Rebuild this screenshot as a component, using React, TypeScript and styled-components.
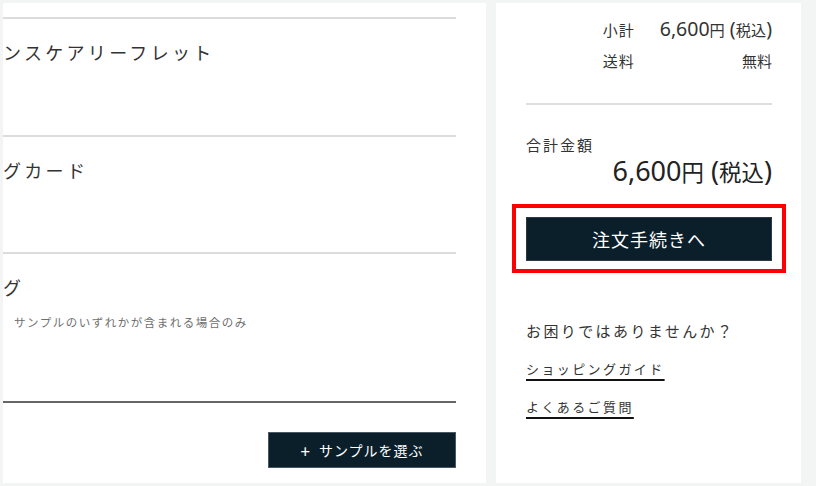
import React from "react";
import styled, { createGlobalStyle } from "styled-components";

const Global = createGlobalStyle`
  html, body { margin: 0; padding: 0; background: #f3f4f4; }
  body { font-family: "Noto Sans CJK JP", "Noto Sans", sans-serif; color: #333; }
  * { box-sizing: border-box; }
`;

const Page = styled.div`
  display: flex;
  gap: 10px;
  height: 486px;
  padding: 3px 15px 3px 3px;
`;

const LeftPanel = styled.div`
  width: 483px;
  background: #fff;
  padding: 14px 30px 0 0;
  display: flex;
  flex-direction: column;
  overflow: hidden;
`;

const Section = styled.div<{ $h: number; $last?: boolean }>`
  border-top: 2px solid #dcdcdc;
  height: ${(p) => p.$h}px;
  padding-top: 20px;
  ${(p) => (p.$last ? "border-bottom: 2px solid #666;" : "")}
`;

const Title = styled.div`
  font-size: 18px;
  line-height: 26px;
  letter-spacing: 3.3px;
  white-space: nowrap;
  color: #333;
`;

const Note = styled.div`
  margin-top: 13px;
  padding-left: 11px;
  font-size: 11.5px;
  line-height: 18px;
  letter-spacing: 1.5px;
  color: #6f6f6f;
  white-space: nowrap;
`;

const SampleButton = styled.button`
  align-self: flex-end;
  margin-top: 29px;
  width: 188px;
  height: 36px;
  background: #0b1f2b;
  border: 1px solid #4a5862;
  color: #fff;
  font-family: inherit;
  font-size: 14px;
  letter-spacing: 1px;
  display: flex;
  align-items: center;
  justify-content: center;
  gap: 8px;
  cursor: pointer;
`;

const Plus = styled.span`
  font-size: 17px;
  line-height: 1;
`;

const RightPanel = styled.div`
  width: 305px;
  background: #fff;
  padding: 12px 29px 0 30px;
  display: flex;
  flex-direction: column;
`;

const Summary = styled.div`
  display: grid;
  grid-template-columns: auto auto;
  grid-auto-rows: 30px;
  justify-content: end;
  column-gap: 25px;
  row-gap: 1px;
  font-size: 15px;
  line-height: 30px;
`;

const Label = styled.div`
  letter-spacing: 1px;
`;

const Value = styled.div`
  text-align: right;
`;

const PriceText = styled.span<{ $size: number }>`
  font-family: "Noto Sans", sans-serif;
  font-size: ${(p) => p.$size}px;
  line-height: 1;
  white-space: nowrap;
`;

const Kanji = styled.span<{ $ratio: number }>`
  font-family: "Noto Sans CJK JP", sans-serif;
  font-size: ${(p) => p.$ratio}em;
`;

function Price({ size, ratio }: { size: number; ratio: number }) {
  return (
    <PriceText $size={size}>
      6,600<Kanji $ratio={ratio}>円</Kanji> (<Kanji $ratio={ratio}>税込</Kanji>)
    </PriceText>
  );
}

const Divider = styled.div`
  margin-top: 27px;
  border-top: 2px solid #dedede;
`;

const TotalLabel = styled.div`
  margin-top: 29px;
  font-size: 15px;
  line-height: 22px;
  letter-spacing: 2px;
`;

const TotalValue = styled.div`
  margin-top: 1px;
  height: 30px;
  text-align: right;
  line-height: 30px;
  color: #222;
`;

const Highlight = styled.div`
  margin: 17px -14px 0;
  border: 4px solid #ff0000;
  padding: 9px 10px 8px;
`;

const CheckoutButton = styled.button`
  width: 100%;
  height: 44px;
  background: #0b1f2b;
  border: 1px solid #2c3a44;
  color: #fff;
  font-family: inherit;
  font-size: 18px;
  letter-spacing: 1px;
  cursor: pointer;
`;

const HelpTitle = styled.div`
  margin-top: 46px;
  font-size: 15px;
  line-height: 24px;
  letter-spacing: 2.4px;
`;

const HelpLinks = styled.div`
  display: flex;
  flex-direction: column;
  align-items: flex-start;
  gap: 18px;
  margin-top: 16px;
`;

const HelpLink = styled.a`
  font-size: 13px;
  line-height: 20px;
  letter-spacing: 2.4px;
  color: #333;
  text-decoration: underline;
  text-decoration-color: #111;
  text-decoration-thickness: 1.5px;
  text-underline-offset: 5px;
  cursor: pointer;
`;

export default function App() {
  return (
    <>
      <Global />
      <Page>
        <LeftPanel>
          <Section $h={118}>
            <Title>ンスケアリーフレット</Title>
          </Section>
          <Section $h={117}>
            <Title>グカード</Title>
          </Section>
          <Section $h={151} $last>
            <Title>グ</Title>
            <Note>サンプルのいずれかが含まれる場合のみ</Note>
          </Section>
          <SampleButton>
            <Plus>+</Plus>
            <span>サンプルを選ぶ</span>
          </SampleButton>
        </LeftPanel>
        <RightPanel>
          <Summary>
            <Label>小計</Label>
            <Value>
              <Price size={19.5} ratio={0.78} />
            </Value>
            <Label>送料</Label>
            <Value>無料</Value>
          </Summary>
          <Divider />
          <TotalLabel>合計金額</TotalLabel>
          <TotalValue>
            <Price size={27} ratio={0.83} />
          </TotalValue>
          <Highlight>
            <CheckoutButton>注文手続きへ</CheckoutButton>
          </Highlight>
          <HelpTitle>お困りではありませんか？</HelpTitle>
          <HelpLinks>
            <HelpLink>ショッピングガイド</HelpLink>
            <HelpLink>よくあるご質問</HelpLink>
          </HelpLinks>
        </RightPanel>
      </Page>
    </>
  );
}
